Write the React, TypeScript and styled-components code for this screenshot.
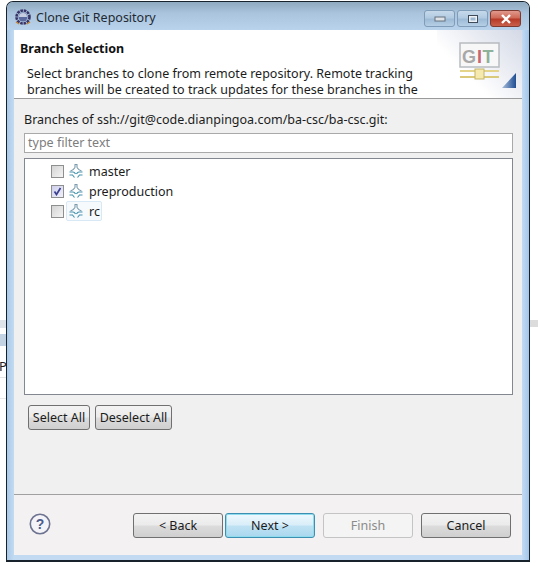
import React from "react";
import styled, { createGlobalStyle } from "styled-components";

const Global = createGlobalStyle`
  html, body { margin: 0; padding: 0; background: #fff; }
  body { width: 538px; height: 566px; overflow: hidden; position: relative; font-family: "Noto Sans", "Liberation Sans", sans-serif; font-size: 12.5px; color: #1c1c1c; }
`;

const BackdropStrip = styled.div<{ $side: "left" | "right"; $top: number; $h: number; $c: string }>`
  position: absolute;
  ${(p) => (p.$side === "left" ? "left: 0; width: 6px;" : "right: 0; width: 8px;")}
  top: ${(p) => p.$top}px;
  height: ${(p) => p.$h}px;
  background: ${(p) => p.$c};
`;
const BackdropLetter = styled.span`
  position: absolute;
  left: -1px;
  top: 357px;
  font-size: 13px;
  color: #222;
`;

const Win = styled.div`
  position: relative;
  box-sizing: border-box;
  margin: 1px 0 0 6px;
  width: 524px;
  height: 561px;
  border: 1px solid #17222c;
  border-bottom-width: 2px;
  border-radius: 7px 7px 0 0;
  padding: 0 7px 5px 7px;
  display: flex;
  flex-direction: column;
  background: linear-gradient(90deg, #a9c9e8 0, #c3dbf2 7px, #c3dbf2 calc(100% - 7px), #a3c6ea 100%);
`;
const TitleBar = styled.div`
  height: 28px;
  margin: 0 -7px;
  padding: 0 8px;
  display: flex;
  align-items: center;
  gap: 5px;
  border-radius: 6px 6px 0 0;
  background: linear-gradient(180deg, #8fa9c0 0, #a9c4dc 40%, #b9d3ec 100%);
  font-size: 12.5px;
  color: #1f2a33;
`;
const TitleText = styled.span`
  flex: 1;
  padding-top: 3px;
`;
const TitleIcon = styled.svg`
  margin-top: 2px;
`;
const Controls = styled.div`
  display: flex;
  gap: 2px;
  align-self: flex-start;
  margin-top: 8px;
`;
const Ctl = styled.div<{ $close?: boolean }>`
  box-sizing: border-box;
  width: 31px;
  height: 17px;
  border: 1px solid ${(p) => (p.$close ? "#7d3a30" : "#7f9cb8")};
  border-radius: 3px;
  display: flex;
  align-items: center;
  justify-content: center;
  background: ${(p) =>
    p.$close
      ? "linear-gradient(180deg,#e0998c 0,#cf6a58 45%,#b63b28 55%,#c9614c 100%)"
      : "linear-gradient(180deg,#c6d9ea 0,#b2cbe2 45%,#9dbad6 55%,#b6cfe6 100%)"};
`;
const Body = styled.div`
  flex: 1;
  display: flex;
  flex-direction: column;
  background: #f0f0f0;
  min-height: 0;
`;
const Header = styled.div`
  position: relative;
  box-sizing: border-box;
  height: 69px;
  padding: 11px 6px 0;
  background: #fff;
  border-bottom: 1px solid #9a9a9a;
  overflow: hidden;
`;
const HeaderFade = styled.div`
  position: absolute;
  right: 0;
  top: 0;
  bottom: 0;
  width: 85px;
  background: linear-gradient(225deg, #d3d9e6 0, #eceef4 38%, #fff 66%);
`;
const HeaderTitle = styled.div`
  font-weight: 700;
  font-size: 12.5px;
  line-height: 16px;
  color: #111;
`;
const HeaderDesc = styled.div`
  margin: 9px 0 0 7px;
  width: 400px;
  line-height: 16px;
  position: relative;
  white-space: nowrap;
`;
const GitLogo = styled.svg`
  position: absolute;
  right: 4px;
  top: 12px;
`;
const Main = styled.div`
  flex: 1;
  padding: 13px 9px 0 10px;
  display: flex;
  flex-direction: column;
  border-bottom: 1px solid #a0a0a0;
`;
const Label = styled.div`
  line-height: 16px;
  white-space: nowrap;
`;
const Filter = styled.div`
  box-sizing: border-box;
  height: 20px;
  margin-top: 5px;
  padding: 0 3px;
  line-height: 18px;
  border: 1px solid #a9a9a9;
  background: #fff;
  color: #7d7d7d;
`;
const Tree = styled.div`
  box-sizing: border-box;
  height: 237px;
  margin-top: 5px;
  padding: 2px 0 0 26px;
  border: 1px solid #828790;
  background: #fff;
  display: flex;
  flex-direction: column;
`;
const Row = styled.div`
  height: 20px;
  display: flex;
  align-items: center;
`;
const Check = styled.span<{ $on?: boolean }>`
  box-sizing: border-box;
  width: 13px;
  height: 13px;
  border: 1px solid #8e8f8f;
  background: ${(p) => (p.$on ? "linear-gradient(135deg,#cfcfec,#f0f0fa)" : "linear-gradient(135deg,#d4d4d4,#f4f4f4)")};
  display: flex;
  align-items: center;
  justify-content: center;
  margin-right: 2px;
`;
const Item = styled.span<{ $sel?: boolean }>`
  box-sizing: border-box;
  height: 20px;
  display: flex;
  align-items: center;
  gap: 5px;
  padding: 0 1px;
  border: 1px solid ${(p) => (p.$sel ? "#d8e8f4" : "transparent")};
  border-radius: 2px;
  background: ${(p) => (p.$sel ? "#f6fafd" : "transparent")};
`;
const SelectRow = styled.div`
  display: flex;
  gap: 5px;
  padding: 10px 0 0 4px;
`;
const Footer = styled.div`
  height: 59px;
  display: flex;
  align-items: center;
  padding: 1px 10px 0 15px;
  background: #f3f1f1;
`;
const HelpIcon = styled.svg`
  margin-right: 82px;
  margin-top: -3px;
`;
const Btn = styled.div<{ $w: number; $primary?: boolean; $disabled?: boolean; $gap?: number }>`
  box-sizing: border-box;
  width: ${(p) => p.$w}px;
  height: 25px;
  margin-left: ${(p) => p.$gap ?? 0}px;
  border: 1px solid ${(p) => (p.$primary ? "#3c8fb0" : p.$disabled ? "#c4c4c4" : "#707070")};
  border-radius: 3px;
  display: flex;
  align-items: center;
  justify-content: center;
  color: ${(p) => (p.$disabled ? "#8a8a8a" : "#1c1c1c")};
  background: ${(p) =>
    p.$primary
      ? "linear-gradient(180deg,#eef8fd 0,#d9eef9 48%,#bfe2f3 52%,#a9d7ee 100%)"
      : p.$disabled
      ? "#f4f4f4"
      : "linear-gradient(180deg,#f3f3f3 0,#ebebeb 48%,#dcdcdc 52%,#cfcfcf 100%)"};
  ${(p) => (p.$primary ? "box-shadow: inset 0 0 0 1px #8fdcee;" : "")}
`;

const BranchIcon = () => (
  <svg width="16" height="16" viewBox="0 0 16 16" fill="none">
    <path d="M6.5 1.5h3M7 1.5v3M9 1.5v3M7 4.5Q5.5 7 2.5 8M9 4.5Q10.5 7 13.5 8" stroke="#7b9bad" strokeWidth="1.1" />
    <path d="M1.5 9h3.5q1.5 0 2.5 2M14.5 9h-3.5q-1.5 0-2.5 2M1.5 12h3l2 2.5M14.5 12h-3l-2 2.5" stroke="#4a94ad" strokeWidth="1.2" />
  </svg>
);
const Tick = () => (
  <svg width="9" height="9" viewBox="0 0 9 9" fill="none">
    <path d="M1.5 4.5 3.5 7.5 7.5 1" stroke="#3b3f8f" strokeWidth="1.7" />
  </svg>
);

export default function App() {
  return (
    <>
      <Global />
      <BackdropStrip $side="left" $top={320} $h={8} $c="#dfe3ea" />
      <BackdropStrip $side="left" $top={334} $h={12} $c="#c3d3e4" />
      <BackdropStrip $side="left" $top={377} $h={1} $c="#e4e4e4" />
      <BackdropStrip $side="left" $top={398} $h={1} $c="#e8e8e8" />
      <BackdropStrip $side="right" $top={320} $h={7} $c="#dcdcdc" />
      <BackdropLetter>P</BackdropLetter>
      <Win>
        <TitleBar>
          <TitleIcon width="16" height="16" viewBox="0 0 16 16">
            <circle cx="8" cy="8" r="6.5" fill="none" stroke="#3a3568" strokeWidth="2.6" strokeDasharray="2.6 0.8" />
            <circle cx="8" cy="8" r="4.5" fill="#5d6aa0" />
            <path d="M4 8a4 4 0 0 1 8 0z" fill="#c7cde0" />
            <path d="M1 13l3 2M15 13l-3 2" stroke="#c9862e" strokeWidth="1.4" />
          </TitleIcon>
          <TitleText>Clone Git Repository</TitleText>
          <Controls>
            <Ctl>
              <svg width="12" height="6" viewBox="0 0 12 6"><rect x="1" y="1" width="10" height="4" fill="#dfe3e8" stroke="#66727f" /></svg>
            </Ctl>
            <Ctl>
              <svg width="12" height="10" viewBox="0 0 12 10"><rect x="1.5" y="1.5" width="9" height="7" fill="#eef2f6" stroke="#3f4b59" /><rect x="3.5" y="3.5" width="5" height="3" fill="#9db7d0" /></svg>
            </Ctl>
            <Ctl $close>
              <svg width="12" height="10" viewBox="0 0 12 10"><path d="M2 1l8 8M10 1L2 9" stroke="#fff" strokeWidth="2.4" /></svg>
            </Ctl>
          </Controls>
        </TitleBar>
        <Body>
          <Header>
            <HeaderFade />
            <HeaderTitle>Branch Selection</HeaderTitle>
            <HeaderDesc>
              Select branches to clone from remote repository. Remote tracking
              <br />
              branches will be created to track updates for these branches in the
            </HeaderDesc>
            <GitLogo width="59" height="50" viewBox="0 0 59 50">
              <defs>
                <linearGradient id="corner" x1="0" y1="0" x2="1" y2="0">
                  <stop offset="0" stopColor="#a9bedb" />
                  <stop offset="1" stopColor="#1f4f93" />
                </linearGradient>
              </defs>
              <rect x="1" y="1" width="39" height="24" fill="#f7f7f7" stroke="#b8bcc0" strokeWidth="1.5" />
              <text x="3" y="21" fontFamily="Liberation Sans, sans-serif" fontWeight="700" fontSize="18" fill="#a8a8a8">G</text>
              <text x="18" y="21" fontFamily="Liberation Sans, sans-serif" fontWeight="700" fontSize="18" fill="#c8656f">I</text>
              <text x="23.5" y="21" fontFamily="Liberation Sans, sans-serif" fontWeight="700" fontSize="18" fill="#8fb09a">T</text>
              <rect x="1" y="28" width="39" height="2" fill="#e4d48a" />
              <rect x="1" y="34" width="39" height="2" fill="#d9c978" />
              <rect x="16" y="27" width="9" height="10" fill="#f6e9ae" stroke="#c4b46a" />
              <path d="M43 46 57 46 57 31z" fill="url(#corner)" />
            </GitLogo>
          </Header>
          <Main>
            <Label>Branches of ssh://git@code.dianpingoa.com/ba-csc/ba-csc.git:</Label>
            <Filter>type filter text</Filter>
            <Tree>
              <Row>
                <Check />
                <Item><BranchIcon />master</Item>
              </Row>
              <Row>
                <Check $on><Tick /></Check>
                <Item><BranchIcon />preproduction</Item>
              </Row>
              <Row>
                <Check />
                <Item $sel><BranchIcon />rc</Item>
              </Row>
            </Tree>
            <SelectRow>
              <Btn $w={62}>Select All</Btn>
              <Btn $w={77}>Deselect All</Btn>
            </SelectRow>
          </Main>
          <Footer>
            <HelpIcon width="22" height="22" viewBox="0 0 22 22">
              <circle cx="11" cy="11" r="9.7" fill="#f4f4f8" stroke="#6d7390" strokeWidth="1.6" />
              <text x="11" y="16" textAnchor="middle" fontFamily="Liberation Sans, sans-serif" fontWeight="700" fontSize="14" fill="#4b5b8c">?</text>
            </HelpIcon>
            <Btn $w={90}>&lt; Back</Btn>
            <Btn $w={90} $gap={2} $primary>Next &gt;</Btn>
            <Btn $w={90} $gap={8} $disabled>Finish</Btn>
            <Btn $w={90} $gap={8}>Cancel</Btn>
          </Footer>
        </Body>
      </Win>
    </>
  );
}
